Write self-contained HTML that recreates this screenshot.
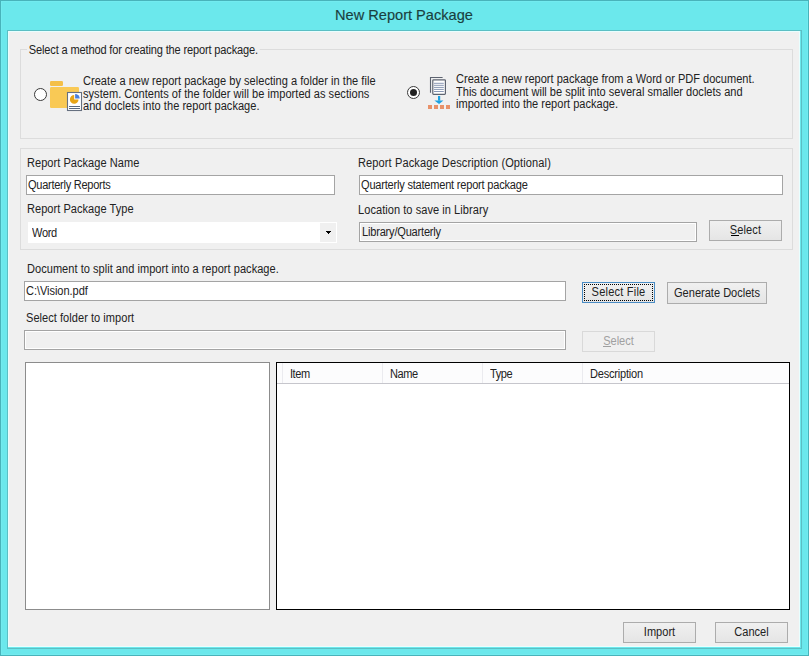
<!DOCTYPE html>
<html><head><meta charset="utf-8">
<style>
html,body{margin:0;padding:0;}
body{width:809px;height:656px;overflow:hidden;position:relative;background:#6be8ec;font-family:"Liberation Sans",sans-serif;font-size:11px;color:#000;}
.a{position:absolute;}
.t{position:absolute;white-space:nowrap;line-height:13px;font-size:12px;color:#222;transform:scaleX(0.92);transform-origin:0 0;}
.gb{position:absolute;border:1px solid #dcdcdc;}
.tb{position:absolute;background:#fff;border:1px solid #a4a4a4;box-sizing:border-box;}
.btn{position:absolute;box-sizing:border-box;border:1px solid #acacac;background:linear-gradient(#f0f0f0,#e5e5e5);font-size:11px;white-space:nowrap;}
.bt{position:absolute;left:0;right:0;text-align:center;line-height:13px;white-space:nowrap;font-size:12px;color:#222;transform:scaleX(0.92);transform-origin:50% 0;}
</style></head><body>
<div class="a" style="left:0;top:0;width:807px;height:654px;border:1px solid #48b3ba;"></div>
<div class="a" style="left:1px;top:1px;width:805px;height:652px;border:1px solid #72ebef;"></div>
<div class="a" style="left:7px;top:30px;width:793px;height:617px;border:1px solid #5bbfc4;"></div>
<div class="a" style="left:8px;top:31px;width:792px;height:616px;background:#e8ffff;"></div>
<div class="a" style="left:9px;top:32px;width:790px;height:614px;background:#f0f0f0;"></div>
<div class="t" id="title" style="transform:none;left:335px;top:6px;font-size:14.6px;line-height:18px;color:#1a3f3f;-webkit-text-stroke:0.15px #1a3f3f;">New Report Package</div>

<div class="gb" style="left:20px;top:49px;width:771px;height:88px;"></div>
<div class="gb" style="left:20px;top:148px;width:771px;height:100px;"></div>

<!-- radio 1 -->
<div class="a" style="left:34px;top:88px;width:11px;height:11px;border:1px solid #3a3a3a;border-radius:50%;background:#fff;"></div>
<svg class="a" style="left:48px;top:79px;" width="36" height="34" viewBox="0 0 36 34">
  <rect x="2" y="2" width="13" height="5" rx="1.2" fill="#f4bf48"/>
  <rect x="2" y="8" width="29" height="21" rx="1.2" fill="#f9c955"/>
  <rect x="19.5" y="13.5" width="14" height="18" fill="#fff" stroke="#667080" stroke-width="1.1"/>
  <path d="M26.2 20.4 L30.5 20.4 A4.3 4.3 0 1 1 26.2 16.1 Z" fill="#e8a516"/>
  <path d="M27.1 19.6 L27.1 15 A4.6 4.6 0 0 1 31.7 19.6 Z" fill="#4a7fdc"/>
  <rect x="21" y="27" width="11" height="1" fill="#5a6a80"/>
  <rect x="21" y="29" width="11" height="1" fill="#5a6a80"/>
</svg>

<!-- radio 2 -->
<div class="a" style="left:407px;top:86px;width:11px;height:11px;border:1px solid #3a3a3a;border-radius:50%;background:#fff;"></div>
<div class="a" style="left:410px;top:89px;width:7px;height:7px;border-radius:50%;background:#222;"></div>
<svg class="a" style="left:426px;top:75px;" width="28" height="36" viewBox="0 0 28 36">
  <path d="M4.5 17.7 V2.5 H16.6" fill="none" stroke="#5d6370" stroke-width="1.1"/>
  <rect x="6.8" y="4.8" width="12.6" height="14.6" rx="0.8" fill="#fff" stroke="#5d6370" stroke-width="1.2"/>
  <rect x="8" y="7.8" width="9.8" height="1" fill="#8a98b4"/>
  <rect x="8" y="9.8" width="9.8" height="1" fill="#8a98b4"/>
  <rect x="8" y="11.9" width="9.8" height="1" fill="#8a98b4"/>
  <rect x="8" y="13.9" width="9.8" height="1" fill="#8a98b4"/>
  <rect x="8" y="16" width="9.8" height="1" fill="#8a98b4"/>
  <rect x="12" y="21" width="2.2" height="4.6" fill="#1ba1e2"/>
  <path d="M8.4 25.4 H17.4 L13.1 28.9 Z" fill="#1ba1e2"/>
  <rect x="2" y="30" width="4" height="4" fill="#e8926a"/>
  <rect x="8" y="30" width="4" height="4" fill="#e8926a"/>
  <rect x="14" y="30" width="4" height="4" fill="#e8926a"/>
  <rect x="20" y="30" width="4" height="4" fill="#e8926a"/>
</svg>

<!-- group 2 controls -->
<div class="tb" style="left:26px;top:175px;width:309px;height:20px;"></div>
<div class="a" style="left:28px;top:222px;width:309px;height:21px;background:#fff;"></div>
<div class="a" style="left:320px;top:223px;width:16px;height:19px;background:#f0f0f0;"></div>
<div class="a" style="left:326px;top:231px;width:5px;height:1px;background:#000;"></div><div class="a" style="left:327px;top:232px;width:3px;height:1px;background:#000;"></div><div class="a" style="left:328px;top:233px;width:1px;height:1px;background:#000;"></div>
<div class="tb" style="left:359px;top:175px;width:424px;height:20px;"></div>
<div class="tb" style="left:359px;top:222px;width:338px;height:20px;background:#f0f0f0;box-shadow:inset 0 0 0 1px #fff;"></div>
<div class="btn" style="left:709px;top:220px;width:73px;height:21px;"><div class="bt" id="b_sel" style="top:3px;letter-spacing:0.1px;">Select</div><div class="a" style="left:21px;top:14px;width:8px;height:1px;background:#000;"></div></div>

<!-- middle -->
<div class="tb" style="left:24px;top:281px;width:542px;height:20px;"></div>
<div class="btn" style="left:582px;top:282px;width:73px;height:21px;border-color:#4a8cc4;"><div class="a" style="left:1px;top:1px;right:1px;bottom:1px;border:1px dotted #000;"></div><div class="bt" id="b_sf" style="top:3px;letter-spacing:0.228px;">Select File</div></div>
<div class="btn" style="left:667px;top:282px;width:100px;height:22px;"><div class="bt" id="b_gd" style="top:4px;">Generate Doclets</div></div>
<div class="tb" style="left:24px;top:330px;width:542px;height:20px;background:#f0f0f0;box-shadow:inset 0 0 0 1px #fff;"></div>
<div class="btn" style="left:582px;top:331px;width:73px;height:21px;border-color:#d9d9d9;background:#f0f0f0;"><div class="bt" id="b_dsel" style="top:3px;color:#a0a0a0;">Select</div><div class="a" style="left:20px;top:14px;width:8px;height:1px;background:#a0a0a0;"></div></div>

<!-- lists -->
<div class="a" style="left:25px;top:362px;width:243px;height:246px;border:1px solid #8c8c8c;background:#fff;"></div>
<div class="a" style="left:276px;top:362px;width:512px;height:246px;border:1px solid #000;background:#fff;"></div>
<div class="a" style="left:277px;top:363px;width:512px;height:20px;background:#fcfcfd;border-bottom:1px solid #c6c6cc;"></div>
<div class="a" style="left:282px;top:363px;width:1px;height:20px;background:#ebebef;"></div>
<div class="a" style="left:382px;top:363px;width:1px;height:20px;background:#ebebef;"></div>
<div class="a" style="left:482px;top:363px;width:1px;height:20px;background:#ebebef;"></div>
<div class="a" style="left:582px;top:363px;width:1px;height:20px;background:#ebebef;"></div>

<!-- bottom buttons -->
<div class="btn" style="left:623px;top:622px;width:73px;height:21px;"><div class="bt" id="b_imp" style="top:3px;">Import</div></div>
<div class="btn" style="left:715px;top:622px;width:73px;height:21px;"><div class="bt" id="b_can" style="top:3px;">Cancel</div></div>

<div class="t" id="sel" style="left:29px;top:44px;letter-spacing:-0.162px;background:#f0f0f0;padding:0 2px;margin-left:-2px;">Select a method for creating the report package.</div>
<div class="t" id="lblk" style="left:83px;top:75px;letter-spacing:0.03px;line-height:12.5px;">Create a new report package by selecting a folder in the file<br>system. Contents of the folder will be imported as sections<br>and doclets into the report package.</div>
<div class="t" id="rblk" style="left:456px;top:73px;letter-spacing:0.0px;line-height:12.5px;">Create a new report package from a Word or PDF document.<br>This document will be split into several smaller doclets and<br>imported into the report package.</div>
<div class="t" id="rpn" style="left:27px;top:157px;letter-spacing:0.036px;">Report Package Name</div>
<div class="t" id="qr" style="left:28px;top:179px;letter-spacing:-0.3px;">Quarterly Reports</div>
<div class="t" id="rpt" style="left:27px;top:203px;letter-spacing:0.036px;">Report Package Type</div>
<div class="t" id="word" style="left:32px;top:227px;letter-spacing:-0.362px;">Word</div>
<div class="t" id="rpd" style="left:358px;top:157px;letter-spacing:0.115px;">Report Package Description (Optional)</div>
<div class="t" id="qs" style="left:361px;top:179px;letter-spacing:-0.227px;">Quarterly statement report package</div>
<div class="t" id="loc" style="left:358px;top:204px;letter-spacing:0.054px;">Location to save in Library</div>
<div class="t" id="lib" style="left:362px;top:226px;letter-spacing:-0.211px;">Library/Quarterly</div>
<div class="t" id="doc" style="left:27px;top:263px;letter-spacing:0.03px;">Document to split and import into a report package.</div>
<div class="t" id="cv" style="left:26px;top:285px;letter-spacing:-0.05px;">C:\Vision.pdf</div>
<div class="t" id="sfi" style="left:26px;top:312px;letter-spacing:0.04px;">Select folder to import</div>
<div class="t" id="item" style="left:290px;top:368px;letter-spacing:-0.507px;">Item</div>
<div class="t" id="name" style="left:390px;top:368px;letter-spacing:-0.507px;">Name</div>
<div class="t" id="type" style="left:490px;top:368px;letter-spacing:-0.435px;">Type</div>
<div class="t" id="desc" style="left:590px;top:368px;letter-spacing:-0.239px;">Description</div>
</body></html>
